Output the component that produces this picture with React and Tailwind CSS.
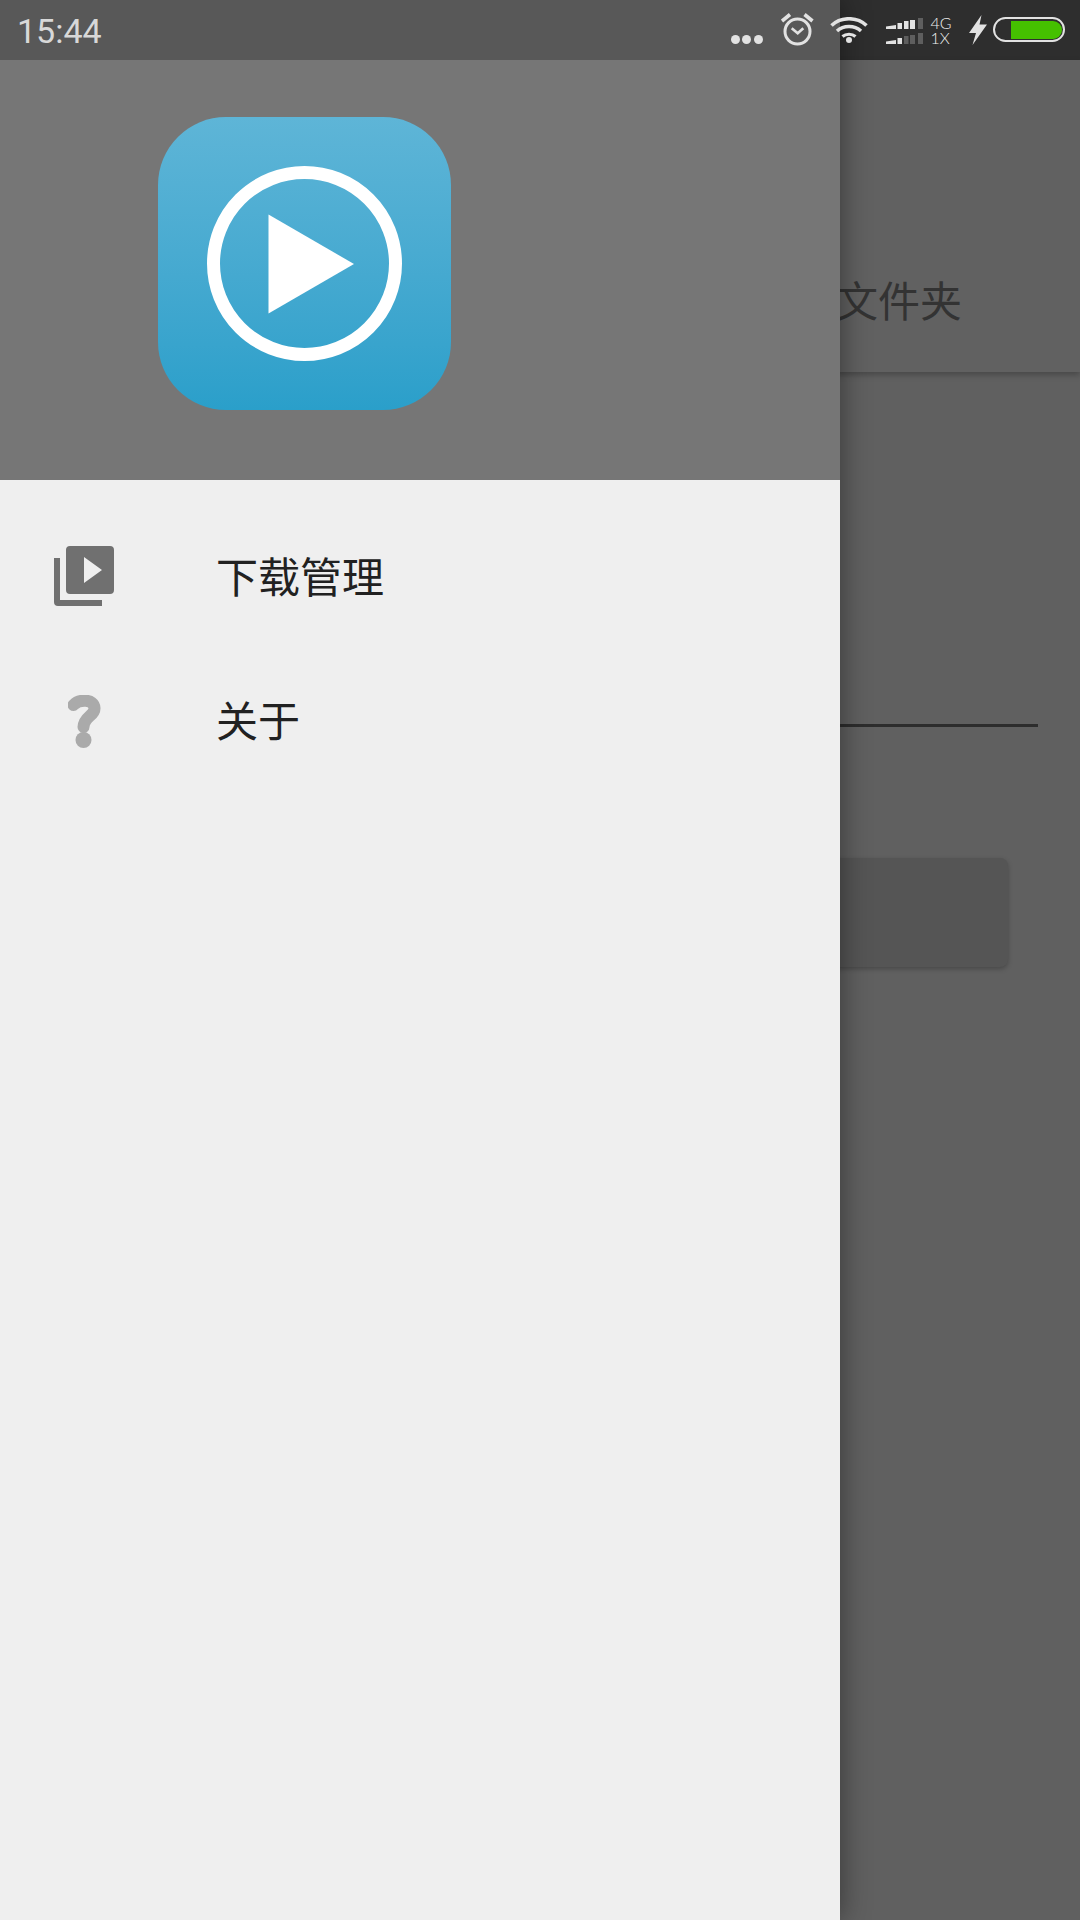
const Alarm = () => (
  <svg width="34" height="34" viewBox="0 0 34 34" fill="none" stroke="#e2e2e2" className="shrink-0">
    <circle cx="16.5" cy="18.5" r="12.5" strokeWidth="3" />
    <path d="M10.7 15.3l6 5 5.6-5" strokeWidth="2.6" />
    <path d="M1 8l8-6.5M23.5 1.5L31.5 8" strokeWidth="3.6" />
  </svg>
);

const Wifi = () => (
  <svg width="38" height="26" viewBox="0 0 38 26" fill="none" stroke="#e2e2e2" className="shrink-0">
    <path d="M1.5 8.5C11 -0.5 27 -0.5 36.5 8.5" strokeWidth="3.6" />
    <path d="M7 14C13.5 8 24.5 8 31 14" strokeWidth="3.4" />
    <path d="M12.5 19.5C16 16.5 22 16.5 25.5 19.5" strokeWidth="3.2" />
    <circle cx="19" cy="23" r="3" fill="#e2e2e2" stroke="none" />
  </svg>
);

// one sim row: a wedge and four bars, `on` of them lit
const Signal = ({ on }) => {
  const bars = [
    { x: 11.5, w: 4.5, h: 6 },
    { x: 18, w: 4.5, h: 8 },
    { x: 24, w: 5, h: 9 },
    { x: 32, w: 5, h: 11 },
  ];
  return (
    <svg width="37" height="11" viewBox="0 0 37 11" className="block">
      <path d="M0 11V8.5L10 7v4z" fill="#e2e2e2" />
      {bars.map((b, i) => (
        <rect key={i} x={b.x} y={11 - b.h} width={b.w} height={b.h} fill={i < on ? "#e2e2e2" : "#5e5e5e"} />
      ))}
    </svg>
  );
};

const Bolt = () => (
  <svg width="18" height="30" viewBox="0 0 18 30" fill="#e2e2e2" className="shrink-0">
    <path d="M12.5 0L0 18h7L3.5 30 18 9.5h-7.5z" />
  </svg>
);

const VideoLibrary = () => (
  <svg width="60" height="60" viewBox="0 0 60 60" fill="#707070">
    <path d="M0 12h6v42h42v6H4a4 4 0 0 1-4-4z" />
    <path
      fillRule="evenodd"
      d="M16 0h40a4 4 0 0 1 4 4v40a4 4 0 0 1-4 4H16a4 4 0 0 1-4-4V4a4 4 0 0 1 4-4zM30 11v26l18-13z"
    />
  </svg>
);

const HelpIcon = () => (
  <svg width="34" height="54" viewBox="0 0 34 54" fill="none" className="ml-[14px] mt-[4px] blur-[0.7px]">
    <path d="M5.5 10C11 4 26 3.5 26.5 13C27 21 16 21 15.5 32" stroke="#aaaaaa" strokeWidth="12" strokeLinecap="round" />
    <circle cx="15.5" cy="45" r="8" fill="#aaaaaa" />
  </svg>
);

const AppLogo = () => (
  <div className="w-[293px] h-[293px] rounded-[68px] bg-gradient-to-b from-[#5eb5d7] to-[#2a9fca] flex items-center justify-center">
    <svg width="195" height="195" viewBox="0 0 195 195">
      <circle cx="97.5" cy="97.5" r="91" fill="none" stroke="#ffffff" strokeWidth="13" />
      <path d="M61.5 48.5L147 98 61.5 147.5z" fill="#ffffff" />
    </svg>
  </div>
);

const MenuRow = ({ icon, label }) => (
  <div className="h-[144px] flex items-center">
    <div className="w-[216px] pl-[54px] shrink-0 flex items-center">{icon}</div>
    <span className="text-[42px] leading-none text-[#212121] pb-[3px]">{label}</span>
  </div>
);

export default function App() {
  return (
    <div className="relative w-[1080px] h-[1920px] overflow-hidden bg-[#606060] font-['Noto_Sans_CJK_SC','Noto_Sans',sans-serif]">
      {/* page behind the drawer */}
      <div className="h-[60px] bg-[#2e2e2e]" />
      <div className="h-[312px] bg-[#616161] shadow-[0_3px_6px_rgba(0,0,0,0.25)] flex justify-end items-end pr-[118px] pb-[52px]">
        <span className="text-[42px] leading-none text-[#333333]">文件夹</span>
      </div>
      <div className="mt-[352px] ml-[600px] w-[438px] h-[3px] bg-[#2d2d2d]" />
      <div className="mt-[131px] ml-[600px] w-[408px] h-[109px] rounded-[8px] bg-[#555555] shadow-[0_2px_5px_rgba(0,0,0,0.25)]" />

      {/* drawer */}
      <div className="absolute top-0 left-0 bottom-0 w-[840px] bg-[#efefef] shadow-[0_0_28px_rgba(0,0,0,0.45)]">
        <div className="h-[60px] bg-[#585858]" />
        <div className="h-[420px] bg-[#767676] pl-[158px] pt-[57px]">
          <AppLogo />
        </div>
        <div className="pt-[24px]">
          <MenuRow icon={<VideoLibrary />} label="下载管理" />
          <MenuRow icon={<HelpIcon />} label="关于" />
        </div>
      </div>

      {/* status bar sits over the drawer and the page */}
      <div className="absolute top-0 left-0 right-0 h-[60px] flex items-start pl-[17px] pr-[15px]">
        <span className="mt-[11px] text-[34px] leading-[40px] text-[#d8d8d8] font-['Roboto',sans-serif]">
          15:44
        </span>
        <div className="ml-auto mt-[34.5px] mr-[18px] flex gap-[2.5px]">
          <span className="w-[9px] h-[9px] rounded-full bg-[#e2e2e2]" />
          <span className="w-[9px] h-[9px] rounded-full bg-[#e2e2e2]" />
          <span className="w-[9px] h-[9px] rounded-full bg-[#e2e2e2]" />
        </div>
        <div className="mt-[13px] mr-[15px]"><Alarm /></div>
        <div className="mt-[17px] mr-[18px]"><Wifi /></div>
        <div className="mt-[18px] mr-[8px] flex flex-col gap-[4px]">
          <Signal on={3} />
          <Signal on={1} />
        </div>
        <div className="mt-[15px] w-[39.5px] flex flex-col text-[16px] leading-[15px] font-light text-[#f0f0f0] font-['Lato',sans-serif]">
          <span>4G</span>
          <span>1X</span>
        </div>
        <div className="mt-[15px] mr-[6px] -ml-[1px]"><Bolt /></div>
        <div className="mt-[17px] w-[72px] h-[25px] rounded-full border-[2.5px] border-[#e2e2e2] flex items-center justify-end pr-[1.5px]">
          <div className="w-[51px] h-[18px] bg-[#45c000] rounded-r-full" />
        </div>
      </div>
    </div>
  );
}
